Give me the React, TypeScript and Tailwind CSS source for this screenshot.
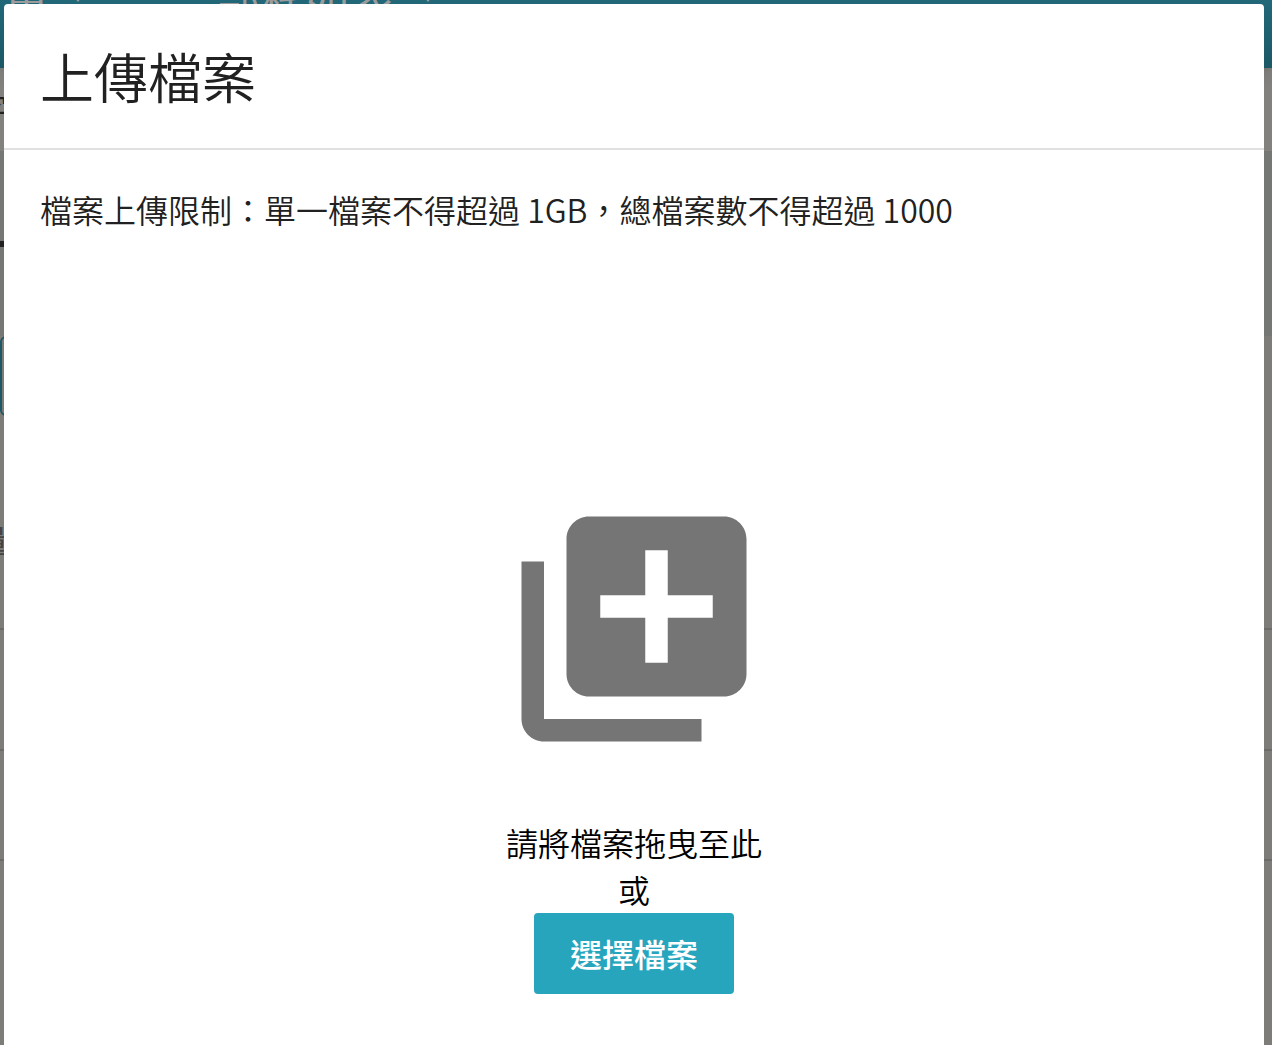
import { MdLibraryAdd } from 'react-icons/md'

function Caret() {
  return (
    <svg viewBox="0 0 18 12" className="h-3 w-[18px] fill-current">
      <path d="M0 0h18l-9 12z" />
    </svg>
  )
}

function PageBehind() {
  return (
    <div aria-hidden="true" className="absolute inset-0 flex flex-col overflow-hidden bg-[#7d7c79]">
      <header className="relative -mt-19 flex h-36 shrink-0 items-center bg-linear-to-b from-[#22697a] from-50% to-[#1c5866] pl-1 text-[45px] leading-none whitespace-nowrap text-[#9c9c9c] shadow-lg">
        <span>量</span>
        <span className="ml-5">
          <Caret />
        </span>
        <span className="ml-32">部程如表</span>
        <span className="ml-6">
          <Caret />
        </span>
      </header>

      <div className="h-[83px] shrink-0 bg-[#82817e] pt-4">
        <p className="-ml-6 text-[32px] leading-[47px] text-[#212121]">字</p>
      </div>
      <div className="h-[185px] shrink-0 bg-[#757774] pt-[90px]">
        <div className="h-[6px] w-10 bg-[#212121]" />
      </div>
      <div className="h-20 w-40 shrink-0 rounded-md border-2 border-[#1c5866]" />

      <div className="h-[214px] shrink-0 border-b-2 border-[#6c6b69] pt-[100px]">
        <p className="-ml-6 text-[32px] leading-[47px] text-[#444444]">量</p>
      </div>
      <div className="h-[121px] shrink-0 border-b-2 border-[#6c6b69]" />
      <div className="h-[110px] shrink-0 border-b-2 border-[#6c6b69]" />
    </div>
  )
}

export default function App() {
  return (
    <div className="relative flex min-h-dvh flex-col font-['Noto_Sans_CJK_TC',sans-serif]">
      <PageBehind />

      {/* Upload dialog */}
      <div
        role="dialog"
        aria-labelledby="upload-title"
        className="relative mx-1 mt-1 mr-2 flex grow flex-col rounded-t bg-white font-[350]"
      >
        <header className="border-b-2 border-[#e0e0e0] p-9">
          <h1 id="upload-title" className="text-[54px] leading-[72px] text-[#212121]">
            上傳檔案
          </h1>
        </header>

        <p className="px-9 pt-9 text-[32px] leading-[47px] text-[#212121]">
          檔案上傳限制：單一檔案不得超過 1GB，總檔案數不得超過 1000
        </p>

        <div className="flex grow flex-col items-center justify-end pt-60 pb-[51px] text-[32px] leading-[47px] text-black">
          <MdLibraryAdd className="size-[270px] text-[#757575]" />
          <p className="mt-[55px]">請將檔案拖曳至此</p>
          <p>或</p>
          <button type="button" className="h-[81px] rounded bg-[#27a5bd] px-9 font-medium text-white">
            選擇檔案
          </button>
        </div>
      </div>
    </div>
  )
}
